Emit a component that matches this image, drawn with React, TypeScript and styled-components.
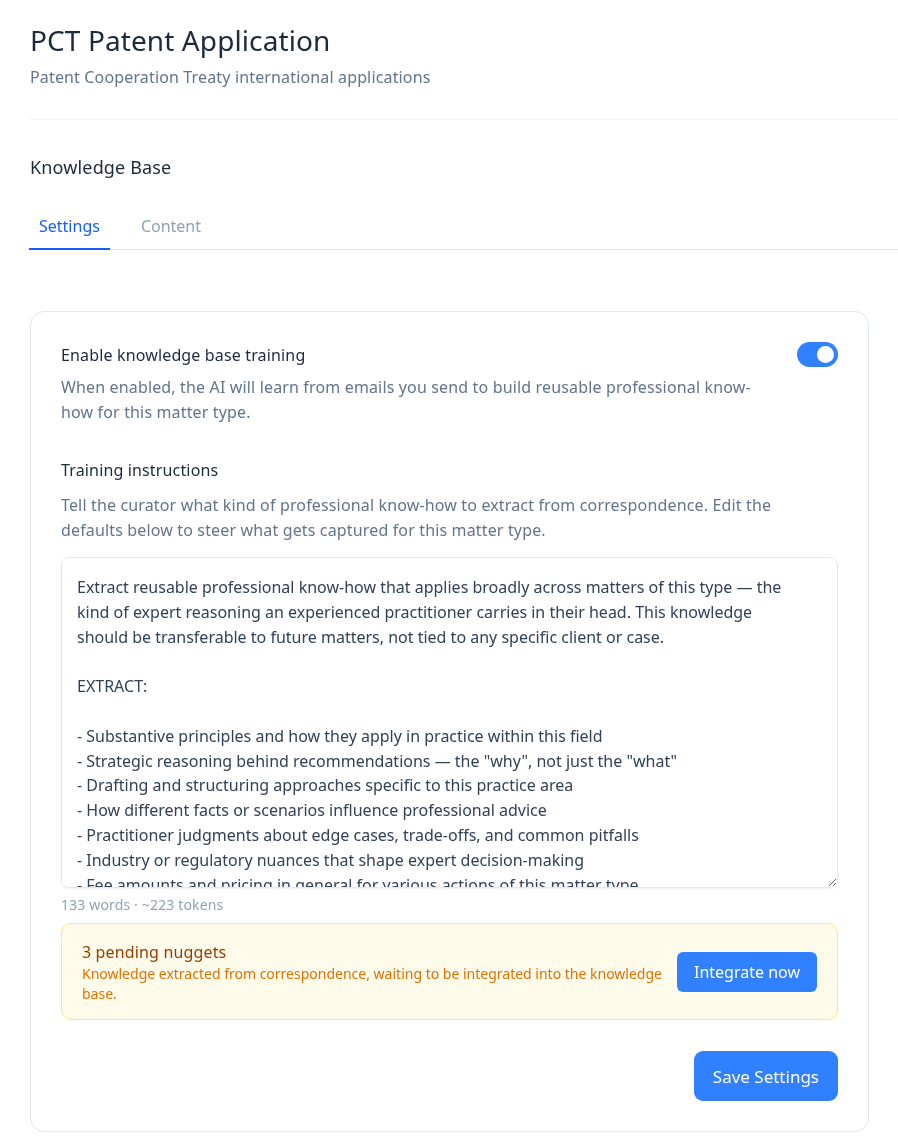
import React, { useState } from 'react'
import styled, { createGlobalStyle } from 'styled-components'

const COLORS = {
  ink: '#1d293d',
  body: '#314158',
  muted: '#62748e',
  faint: '#90a1b9',
  border: '#e2e8f0',
  blue: '#3080ff',
  blueDark: '#155dfc',
  amberBg: '#fffbeb',
  amberBorder: '#fee685',
  amberTitle: '#973c00',
  amberText: '#e17100',
}

const DEFAULT_INSTRUCTIONS = `Extract reusable professional know-how that applies broadly across matters of this type — the kind of expert reasoning an experienced practitioner carries in their head. This knowledge should be transferable to future matters, not tied to any specific client or case.

EXTRACT:

- Substantive principles and how they apply in practice within this field
- Strategic reasoning behind recommendations — the "why", not just the "what"
- Drafting and structuring approaches specific to this practice area
- How different facts or scenarios influence professional advice
- Practitioner judgments about edge cases, trade-offs, and common pitfalls
- Industry or regulatory nuances that shape expert decision-making
- Fee amounts and pricing in general for various actions of this matter type

DO NOT EXTRACT:

- Client names, matter details or anything identifying a specific case
- Scheduling, logistics or routine administrative correspondence`

const GlobalStyle = createGlobalStyle`
  body {
    margin: 0;
    background: #ffffff;
    font-family: "Noto Sans", "Open Sans", sans-serif;
    letter-spacing: 0.15px;
    color: ${COLORS.ink};
  }
  * { box-sizing: border-box; }
`

const App = () => {
  const [enabled, setEnabled] = useState(true)
  const [text, setText] = useState(DEFAULT_INSTRUCTIONS)
  const words = 133
  const tokens = 223

  return (
    <>
      <GlobalStyle />
      <Page>
        <Header>
          <Title>PCT Patent Application</Title>
          <Subtitle>Patent Cooperation Treaty international applications</Subtitle>
        </Header>

        <SectionTitle>Knowledge Base</SectionTitle>
        <Tabs>
          <Tab active>Settings</Tab>
          <Tab>Content</Tab>
        </Tabs>

        <Card>
          <ToggleRow>
            <div>
              <Label>Enable knowledge base training</Label>
              <Help top={7} maxWidth={712}>
                When enabled, the AI will learn from emails you send to build reusable professional
                know-how for this matter type.
              </Help>
            </div>
            <Switch on={enabled} onClick={() => setEnabled(!enabled)} aria-label='Toggle training'>
              <Knob on={enabled} />
            </Switch>
          </ToggleRow>

          <Field>
            <Label>Training instructions</Label>
            <Help top={10} maxWidth={750}>
              Tell the curator what kind of professional know-how to extract from correspondence. Edit
              the defaults below to steer what gets captured for this matter type.
            </Help>
            <TextArea value={text} onChange={(e) => setText(e.target.value)} spellCheck={false} />
            <Count>
              {words} words · ~{tokens} tokens
            </Count>
          </Field>

          <Notice>
            <NoticeText>
              <NoticeTitle>3 pending nuggets</NoticeTitle>
              <NoticeBody>
                Knowledge extracted from correspondence, waiting to be integrated into the knowledge
                base.
              </NoticeBody>
            </NoticeText>
            <Button>Integrate now</Button>
          </Notice>

          <Footer>
            <Button large>Save Settings</Button>
          </Footer>
        </Card>
      </Page>
    </>
  )
}

const Page = styled.div`
  padding: 20px 0 14px 30px;
`

const Header = styled.header`
  padding-bottom: 30px;
  border-bottom: 1px solid #f1f5f9;
  margin-left: -1px;
  padding-left: 1px;
`

const Title = styled.h1`
  margin: 0;
  font-size: 28px;
  line-height: 40px;
  font-weight: 400;
  letter-spacing: 0.1px;
  color: ${COLORS.ink};
`

const Subtitle = styled.p`
  margin: 5px 0 0;
  font-size: 16px;
  line-height: 24px;
  color: ${COLORS.muted};
`

const SectionTitle = styled.h2`
  margin: 33px 0 0;
  font-size: 18px;
  line-height: 28px;
  font-weight: 400;
  color: ${COLORS.ink};
`

const Tabs = styled.nav`
  display: flex;
  margin-top: 29px;
  margin-left: -1px;
  border-bottom: 1px solid ${COLORS.border};
`

const Tab = styled.button<{ active?: boolean }>`
  border: none;
  background: none;
  font: inherit;
  font-size: 16px;
  line-height: 24px;
  padding: 4px 10px 10px;
  margin-bottom: -1px;
  cursor: pointer;
  color: ${(p) => (p.active ? COLORS.blueDark : COLORS.faint)};
  border-bottom: 2px solid ${(p) => (p.active ? COLORS.blueDark : 'transparent')};
  & + & {
    margin-left: 21px;
  }
`

const Card = styled.section`
  margin: 61px 29px 0 0;
  padding: 30px;
  border: 1px solid ${COLORS.border};
  border-radius: 14px;
  background: #fff;
`

const ToggleRow = styled.div`
  display: flex;
  justify-content: space-between;
  align-items: flex-start;
  gap: 24px;
`

const Label = styled.div`
  font-size: 16px;
  line-height: 26px;
  color: ${COLORS.ink};
`

const Help = styled.p<{ top: number; maxWidth: number }>`
  margin: ${(p) => p.top}px 0 0;
  max-width: ${(p) => p.maxWidth}px;
  font-size: 16px;
  line-height: 25px;
  color: ${COLORS.muted};
`

const Switch = styled.button<{ on: boolean }>`
  flex: none;
  position: relative;
  width: 41px;
  height: 25px;
  border: none;
  border-radius: 999px;
  padding: 0;
  cursor: pointer;
  background: ${(p) => (p.on ? COLORS.blue : '#cbd5e1')};
`

const Knob = styled.span<{ on: boolean }>`
  position: absolute;
  top: 4px;
  left: ${(p) => (p.on ? '20px' : '4px')};
  width: 17px;
  height: 17px;
  border-radius: 50%;
  background: #fff;
`

const Field = styled.div`
  margin-top: 32px;
`

const TextArea = styled.textarea`
  display: block;
  width: 100%;
  height: 331px;
  margin-top: 14px;
  padding: 17px 35px 13px 15px;
  border: 1px solid ${COLORS.border};
  border-radius: 8px;
  font: inherit;
  font-size: 16px;
  line-height: 24.8px;
  color: ${COLORS.body};
  resize: vertical;
  scrollbar-width: none;
  box-shadow: 0 1px 2px rgba(15, 23, 42, 0.06);
  &:focus {
    outline: none;
    border-color: ${COLORS.blue};
  }
`

const Count = styled.div`
  margin-top: 7px;
  font-size: 14px;
  line-height: 20px;
  color: ${COLORS.faint};
`

const Notice = styled.div`
  display: flex;
  align-items: center;
  gap: 12px;
  margin-top: 8px;
  padding: 16px 20px 15px;
  background: ${COLORS.amberBg};
  border: 1px solid ${COLORS.amberBorder};
  border-radius: 10px;
`

const NoticeText = styled.div`
  flex: 1;
`

const NoticeTitle = styled.div`
  font-size: 16px;
  line-height: 24px;
  color: ${COLORS.amberTitle};
`

const NoticeBody = styled.div`
  font-size: 14px;
  line-height: 20px;
  letter-spacing: 0;
  color: ${COLORS.amberText};
`

const Button = styled.button<{ large?: boolean }>`
  flex: none;
  border: none;
  cursor: pointer;
  font: inherit;
  color: #fff;
  background: ${COLORS.blue};
  font-size: ${(p) => (p.large ? '17px' : '16px')};
  height: ${(p) => (p.large ? '50px' : '40px')};
  padding: ${(p) => (p.large ? '0 19px' : '0 17px')};
  border-radius: ${(p) => (p.large ? '9px' : '6px')};
  &:hover {
    background: #2b6fe8;
  }
`

const Footer = styled.div`
  display: flex;
  justify-content: flex-end;
  margin-top: 31px;
`

export default App
